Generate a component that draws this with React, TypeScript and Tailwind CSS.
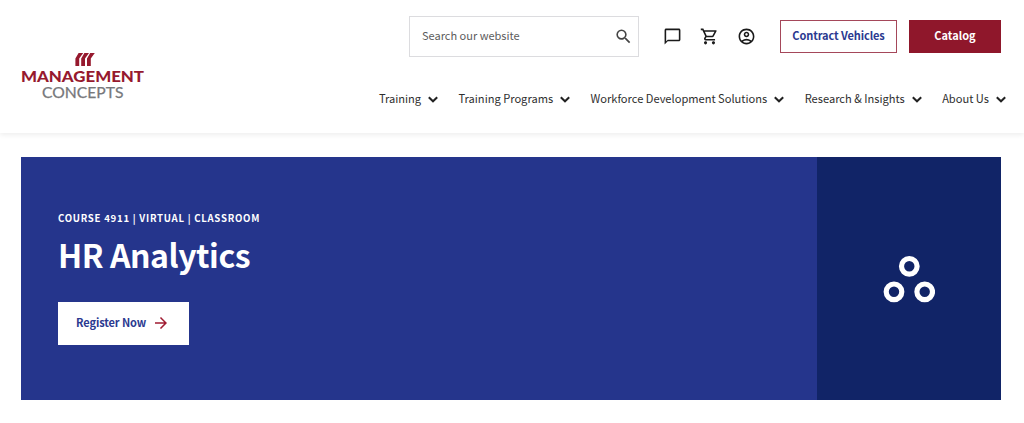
import {
  MdSearch,
  MdOutlineShoppingCart,
  MdOutlineAccountCircle,
  MdOutlineChatBubbleOutline,
  MdArrowForward,
} from "react-icons/md";

const navItems = [
  "Training",
  "Training Programs",
  "Workforce Development Solutions",
  "Research & Insights",
  "About Us",
];

function Chevron() {
  return (
    <svg
      className="mt-px ml-[7px] h-[7px] w-[10px] shrink-0"
      viewBox="0 0 10 7"
      fill="none"
      stroke="#222"
      strokeWidth="2"
    >
      <path d="M.8 1.2 5 5.3 9.2 1.2" />
    </svg>
  );
}

function Logo() {
  return (
    <a href="#" className="mt-[51px] block h-[52px] w-[124px]" aria-label="Management Concepts">
      <svg className="h-[52px] w-[124px]" viewBox="0 0 124 52">
        <g fill="#96192e">
          <path d="M57.6 2h4.6l-4 5.6V15h-3.8V7.4z" />
          <path d="M63.4 2H68l-4 5.6V15h-3.8V7.4z" />
          <path d="M69.2 2h4.6l-4 5.6V15H66V7.4z" />
        </g>
        <text
          x="0"
          y="30.7"
          fill="#96192e"
          fontFamily="Lato, sans-serif"
          fontSize="14.8"
          fontWeight="900"
          textLength="123"
          lengthAdjust="spacingAndGlyphs"
        >
          MANAGEMENT
        </text>
        <text
          x="21"
          y="46.8"
          fill="#77787b"
          stroke="#77787b"
          strokeWidth="0.25"
          fontFamily="Lato, sans-serif"
          fontSize="15.6"
          textLength="81.5"
          lengthAdjust="spacingAndGlyphs"
        >
          CONCEPTS
        </text>
      </svg>
    </a>
  );
}

function Header() {
  return (
    <header className="flex h-[133px] pl-[21px] shadow-[0_2px_5px_rgba(0,0,0,0.07)]">
      <Logo />
      <div className="ml-auto flex flex-col items-end">
        <div className="mt-4 mr-[23px] flex h-[41px] items-center">
          <div className="flex h-[41px] w-[230px] items-center justify-between border border-[#dcdcdf] pr-[5px] pl-3">
            <span className="-mt-[2px] text-[11px] text-[#5c5c5c]">Search our website</span>
            <MdSearch className="size-[19px] text-[#444]" />
          </div>
          <div className="ml-6 flex items-center gap-[18px] text-[#1a1a1a]">
            <MdOutlineChatBubbleOutline className="size-[19px]" />
            <MdOutlineShoppingCart className="size-[19px]" />
            <MdOutlineAccountCircle className="size-[19px]" />
          </div>
          <a
            href="#"
            className="ml-6 flex h-[33px] w-[117px] items-center justify-center border border-[#a5475a] pb-[2px] text-[11px] font-bold tracking-[-0.1px] text-[#2b3990]"
          >
            Contract Vehicles
          </a>
          <a
            href="#"
            className="ml-3 flex h-[33px] w-[92px] items-center justify-center bg-[#8f172b] pb-[2px] text-[11px] font-bold text-white"
          >
            Catalog
          </a>
        </div>
        <nav className="mt-8 mr-[18px] flex h-5 items-center gap-[20.4px]">
          {navItems.map((label) => (
            <a
              key={label}
              href="#"
              className="flex items-center text-[11.1px] whitespace-nowrap text-[#2e2e2e]"
            >
              <span className="-mt-[2px]">{label}</span>
              <Chevron />
            </a>
          ))}
        </nav>
      </div>
    </header>
  );
}

function Hero() {
  return (
    <section className="mt-6 ml-[21px] flex h-[243px] w-[980px]">
      <div className="flex w-[796px] flex-col items-start bg-[#25358c] pl-[37px] text-white">
        <p className="mt-[53px] text-[9.6px] leading-4 font-bold tracking-[0.75px]">
          COURSE 4911 | VIRTUAL | CLASSROOM
        </p>
        <h1 className="mt-[7px] text-[32px] leading-[42px] font-bold tracking-[-0.45px]">
          HR Analytics
        </h1>
        <a
          href="#"
          className="mt-[27px] flex h-[43px] w-[131px] items-center bg-white pl-[18px] text-[11px] font-bold text-[#2b3990]"
        >
          <span className="-mt-[3px] tracking-[-0.1px]">Register Now</span>
          <MdArrowForward className="-mt-px ml-[6px] size-[18px] text-[#a01c32]" />
        </a>
      </div>
      <div className="flex w-[184px] items-center justify-center bg-[#112467]">
        <svg className="h-12 w-[52px]" viewBox="0 0 52 48" fill="none" stroke="#fff" strokeWidth="5.2">
          <circle cx="26.3" cy="11.3" r="7.8" />
          <circle cx="11" cy="36.8" r="7.8" />
          <circle cx="41.7" cy="36.8" r="7.8" />
        </svg>
      </div>
    </section>
  );
}

export default function App() {
  return (
    <div className="h-[423px] w-[1024px] overflow-hidden bg-white font-['Noto_Sans_CJK_SC',sans-serif]">
      <Header />
      <Hero />
    </div>
  );
}
